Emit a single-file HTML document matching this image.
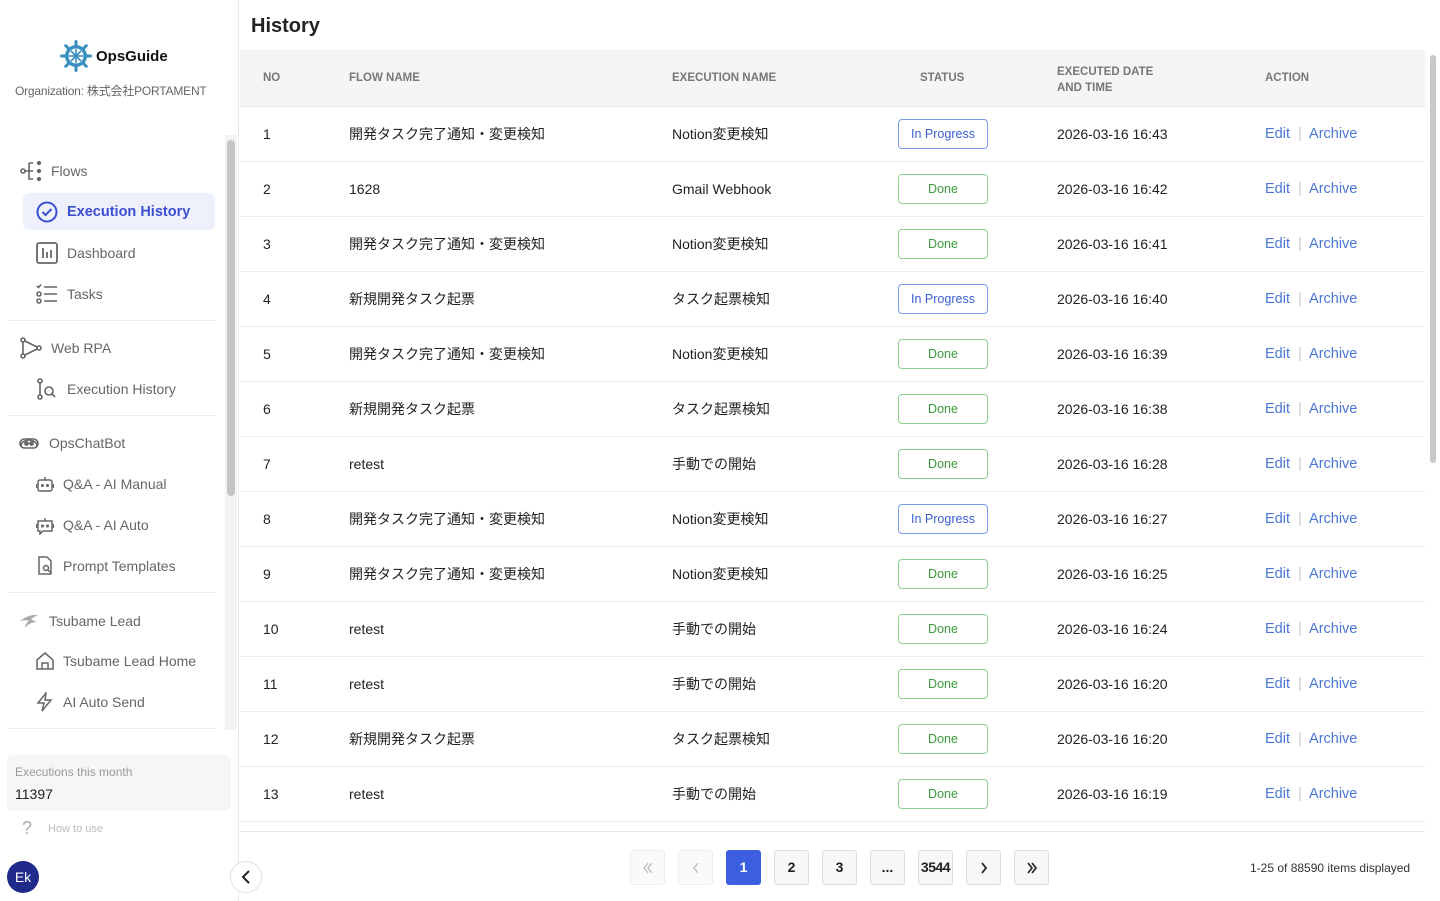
<!DOCTYPE html>
<html><head><meta charset="utf-8">
<style>
*{box-sizing:border-box;margin:0;padding:0}
body{width:1440px;height:901px;overflow:hidden;background:#fff;font-family:"Liberation Sans","Noto Sans CJK JP",sans-serif;color:#222;position:relative}
.sb{position:absolute;left:0;top:0;width:239px;height:901px;border-right:1px solid #e8e8e8;background:#fff}
.logo{position:absolute;left:60px;top:40px;display:flex;align-items:center;gap:4px;font-weight:bold;font-size:15px;color:#111}
.org{position:absolute;left:15px;top:82px;font-size:12px;color:#666;letter-spacing:-0.2px}
.track{position:absolute;left:225px;top:135px;width:12px;height:595px;background:#f3f3f3}
.thumb{position:absolute;left:227px;top:140px;width:8px;height:356px;background:#c4c4c4;border-radius:4px}
.it{position:absolute;display:flex;align-items:center;font-size:14px;color:#666}
.it svg{margin-right:9px}
.sep{position:absolute;left:8px;width:208px;height:1px;background:#ececec}
.act{position:absolute;left:23px;top:193px;width:192px;height:37px;background:#eef0fc;border-radius:6px}
.box{position:absolute;left:7px;top:755px;width:224px;height:56px;background:#f6f6f6;border-radius:6px}
.main{position:absolute;left:240px;top:0;width:1200px;height:901px}
h1{position:absolute;left:11px;top:15px;font-size:20px;font-weight:bold;color:#222}
.tbl{position:absolute;left:0;top:50px;width:1185px;height:782px;border-bottom:1px solid #e6e6e6;overflow:hidden}
.hd{position:absolute;left:0;top:0;width:1185px;height:57px;background:#f5f5f5;border-bottom:1px solid #e8e8e8;font-size:11.5px;font-weight:bold;color:#777}
.hd span{position:absolute}
.row{position:absolute;left:0;width:1185px;height:55px;border-bottom:1px solid #ececec;font-size:14px;color:#222}
.row span{position:absolute;top:18px;line-height:18px}
.pill{position:absolute;left:658px;top:12px;width:90px;height:30px;border:1px solid;border-radius:4px;font-size:12.5px;text-align:center;line-height:28px}
.ip{border-color:#7a9ce8;color:#3a5fd0}
.dn{border-color:#8fd08f;color:#3a9a3a}
.a{color:#4a76d4;font-size:14.5px}
.vs{position:absolute;left:1188px;top:52px;width:10px;height:776px}
.vs div{position:absolute;left:2px;top:3px;width:6px;height:408px;background:#c8c8c8;border-radius:3px}
.pg{position:absolute;top:850px;width:35px;height:35px;border:1px solid #ddd;border-radius:3px;background:#f7f7f7;font-size:14px;font-weight:bold;text-align:center;line-height:33px;color:#222}
.pg svg{position:absolute;left:9px;top:9px}
</style></head><body>
<div class="sb">
 <div class="logo"><svg width="32" height="32" viewBox="0 0 32 32"><g stroke="#3a8fc0" stroke-width="3" stroke-linecap="round"><line x1="16" y1="1.5" x2="16" y2="30.5"/><line x1="1.5" y1="16" x2="30.5" y2="16"/><line x1="5.7" y1="5.7" x2="26.3" y2="26.3"/><line x1="26.3" y1="5.7" x2="5.7" y2="26.3"/></g><circle cx="16" cy="16" r="11" fill="#3a8fc0"/><circle cx="16" cy="16" r="7.5" fill="#fff"/><g stroke="#3a8fc0" stroke-width="1.6"><line x1="16" y1="9" x2="16" y2="23"/><line x1="9" y1="16" x2="23" y2="16"/><line x1="11" y1="11" x2="21" y2="21"/><line x1="21" y1="11" x2="11" y2="21"/></g></svg>OpsGuide</div>
 <div class="org">Organization: 株式会社PORTAMENT</div>
 <div class="track"></div><div class="thumb"></div>
 <div class="it" style="left:20px;top:160px"><svg width="22" height="22" viewBox="0 0 22 22" fill="none" stroke="#666" stroke-width="1.6"><circle cx="3" cy="11" r="2"/><path d="M5 11h4M9 3v16h4M9 3h4M9 11h4"/><circle cx="19" cy="3" r="1.3" fill="#666"/><circle cx="19" cy="11" r="1.3" fill="#666"/><circle cx="19" cy="19" r="1.3" fill="#666"/></svg>Flows</div>
 <div class="act"></div>
 <div class="it" style="left:36px;top:201px;color:#3b4fd0;font-weight:bold;font-size:14.5px"><svg width="22" height="22" viewBox="0 0 22 22" fill="none" stroke="#3b4fd0" stroke-width="2"><circle cx="11" cy="11" r="9.5"/><path d="M6.5 11l3 3 6-6"/></svg>Execution History</div>
 <div class="it" style="left:36px;top:242px"><svg width="22" height="22" viewBox="0 0 22 22" fill="none" stroke="#666" stroke-width="1.8"><rect x="1" y="1" width="20" height="20" rx="2"/><path d="M7 6v10M11 10v6M15 8v8"/></svg>Dashboard</div>
 <div class="it" style="left:36px;top:283px"><svg width="22" height="22" viewBox="0 0 22 22" fill="none" stroke="#666" stroke-width="1.6"><path d="M1 3l1.5 1.5L5 1.5"/><circle cx="3" cy="11" r="2"/><circle cx="3" cy="18" r="2"/><path d="M8 4h13M8 11h13M8 18h13"/></svg>Tasks</div>
 <div class="sep" style="top:320px"></div>
 <div class="it" style="left:20px;top:337px"><svg width="22" height="22" viewBox="0 0 22 22" fill="none" stroke="#666" stroke-width="1.6"><circle cx="3" cy="3" r="2"/><circle cx="3" cy="19" r="2"/><circle cx="19" cy="11" r="2"/><path d="M3 5v12M5 4l12 6M5 18l12-6"/></svg>Web RPA</div>
 <div class="it" style="left:36px;top:378px"><svg width="22" height="22" viewBox="0 0 22 22" fill="none" stroke="#666" stroke-width="1.6"><circle cx="4" cy="3" r="2"/><circle cx="4" cy="19" r="2"/><path d="M4 5v12"/><circle cx="13" cy="13" r="4"/><path d="M16 16l3 3"/></svg>Execution History</div>
 <div class="sep" style="top:415px"></div>
 <div class="it" style="left:18px;top:432px"><svg width="22" height="22" viewBox="0 0 22 22" fill="none" stroke="#666" stroke-width="1.6"><path d="M3 14a8 6 0 0 1 16 0"/><rect x="2" y="7" width="18" height="9" rx="4.5"/><circle cx="8.5" cy="11.5" r="1.6" fill="#666"/><circle cx="13.5" cy="11.5" r="1.6" fill="#666"/></svg>OpsChatBot</div>
 <div class="it" style="left:36px;top:474px"><svg width="18" height="20" viewBox="0 0 18 20" fill="none" stroke="#666" stroke-width="1.5"><rect x="2" y="6" width="14" height="11" rx="2"/><path d="M9 6V3M0.5 10v4M17.5 10v4"/><circle cx="6.5" cy="11.5" r="0.8" fill="#666"/><circle cx="11.5" cy="11.5" r="0.8" fill="#666"/></svg>Q&amp;A - AI Manual</div>
 <div class="it" style="left:36px;top:515px"><svg width="18" height="20" viewBox="0 0 18 20" fill="none" stroke="#666" stroke-width="1.5"><path d="M2 6h14v10H7l-3 3v-3H2z"/><path d="M9 6V3M0.5 9v4M17.5 9v4"/><circle cx="6.5" cy="11" r="0.8" fill="#666"/><circle cx="11.5" cy="11" r="0.8" fill="#666"/></svg>Q&amp;A - AI Auto</div>
 <div class="it" style="left:36px;top:556px"><svg width="18" height="20" viewBox="0 0 18 20" fill="none" stroke="#666" stroke-width="1.5"><path d="M3 1h8l4 4v13H3z"/><circle cx="10" cy="12" r="2.5"/><path d="M12 14l2.5 2.5"/></svg>Prompt Templates</div>
 <div class="sep" style="top:592px"></div>
 <div class="it" style="left:18px;top:610px"><svg width="22" height="22" viewBox="0 0 22 22"><path d="M20 5C12 4 6 8 2 11c4-1 7-1 9 0-3 2-4 5-4 7 3-4 7-6 12-6-3-1-5-2-6-3 3-2 5-3 7-4z" fill="#aaa"/></svg>Tsubame Lead</div>
 <div class="it" style="left:36px;top:651px"><svg width="18" height="20" viewBox="0 0 18 20" fill="none" stroke="#666" stroke-width="1.5"><path d="M1 9L9 2l8 7v9H1z"/><path d="M6 18v-6h6v6"/></svg>Tsubame Lead Home</div>
 <div class="it" style="left:36px;top:692px"><svg width="18" height="20" viewBox="0 0 18 20" fill="none" stroke="#666" stroke-width="1.5"><path d="M10 1L2 11h6l-2 8 9-11H9z"/></svg>AI Auto Send</div>
 <div class="sep" style="top:728px"></div>
 <div class="box"><div style="position:absolute;left:8px;top:10px;font-size:12px;color:#999">Executions this month</div><div style="position:absolute;left:8px;top:31px;font-size:14px;color:#222">11397</div></div>
 <div style="position:absolute;left:22px;top:818px;font-size:18px;color:#aaa">?</div>
 <div style="position:absolute;left:48px;top:823px;font-size:11px;color:#bbb">How to use</div>
 <div style="position:absolute;left:7px;top:861px;width:32px;height:32px;border-radius:50%;background:#1f2a8a;color:#fff;font-size:14px;text-align:center;line-height:32px">Ek</div>
</div>
<div style="position:absolute;left:230px;top:861px;width:32px;height:32px;border-radius:50%;border:1px solid #e0e0e0;background:#fff;z-index:3"><svg width="30" height="30" viewBox="0 0 30 30"><path d="M18 9l-6 6 6 6" fill="none" stroke="#222" stroke-width="2"/></svg></div>
<div class="main">
 <h1>History</h1>
 <div class="tbl">
  <div class="hd"><span style="left:23px;top:22px">NO</span><span style="left:109px;top:22px">FLOW NAME</span><span style="left:432px;top:22px">EXECUTION NAME</span><span style="left:680px;top:22px">STATUS</span><span style="left:817px;top:14px;line-height:16px">EXECUTED DATE<br>AND TIME</span><span style="left:1025px;top:22px">ACTION</span></div>
  <div id="rows"></div>
 </div>
 <div class="vs"><div></div></div>
 <div class="pg" style="left:390px;background:#fafafa;border-color:#eee"><svg width="16" height="16" viewBox="0 0 16 16" fill="none" stroke="#bbb" stroke-width="1.3"><path d="M8 3L4 8l4 5M12 3L8 8l4 5"/></svg></div>
 <div class="pg" style="left:438px;background:#fafafa;border-color:#eee"><svg width="16" height="16" viewBox="0 0 16 16" fill="none" stroke="#bbb" stroke-width="1.3"><path d="M10 3L6 8l4 5"/></svg></div>
 <div class="pg" style="left:486px;background:#3b5fe0;border-color:#3b5fe0;color:#fff">1</div>
 <div class="pg" style="left:534px">2</div>
 <div class="pg" style="left:582px">3</div>
 <div class="pg" style="left:630px">...</div>
 <div class="pg" style="left:678px;letter-spacing:-0.5px">3544</div>
 <div class="pg" style="left:726px"><svg width="16" height="16" viewBox="0 0 16 16" fill="none" stroke="#222" stroke-width="1.8"><path d="M6 3l4 5-4 5"/></svg></div>
 <div class="pg" style="left:774px"><svg width="16" height="16" viewBox="0 0 16 16" fill="none" stroke="#222" stroke-width="1.6"><path d="M4 3l4 5-4 5M8 3l4 5-4 5"/></svg></div>
 <div style="position:absolute;left:1010px;top:861px;font-size:12px;color:#333">1-25 of 88590 items displayed</div>
</div>
<script>
var d=[["開発タスク完了通知・変更検知","Notion変更検知",1,"43"],["1628","Gmail Webhook",0,"42"],["開発タスク完了通知・変更検知","Notion変更検知",0,"41"],["新規開発タスク起票","タスク起票検知",1,"40"],["開発タスク完了通知・変更検知","Notion変更検知",0,"39"],["新規開発タスク起票","タスク起票検知",0,"38"],["retest","手動での開始",0,"28"],["開発タスク完了通知・変更検知","Notion変更検知",1,"27"],["開発タスク完了通知・変更検知","Notion変更検知",0,"25"],["retest","手動での開始",0,"24"],["retest","手動での開始",0,"20"],["新規開発タスク起票","タスク起票検知",0,"20"],["retest","手動での開始",0,"19"],["retest","手動での開始",0,"18"]];
var h="";d.forEach(function(r,i){h+='<div class="row" style="top:'+(57+i*55)+'px"><span style="left:23px">'+(i+1)+'</span><span style="left:109px">'+r[0]+'</span><span style="left:432px">'+r[1]+'</span><div class="pill '+(r[2]?'ip">In Progress':'dn">Done')+'</div><span style="left:817px">2026-03-16 16:'+r[3]+'</span><span style="left:1025px" class="a">Edit <span style="position:static;color:#ccc;margin:0 4px">|</span> Archive</span></div>'});
document.getElementById("rows").innerHTML=h;
</script>
</body></html>
